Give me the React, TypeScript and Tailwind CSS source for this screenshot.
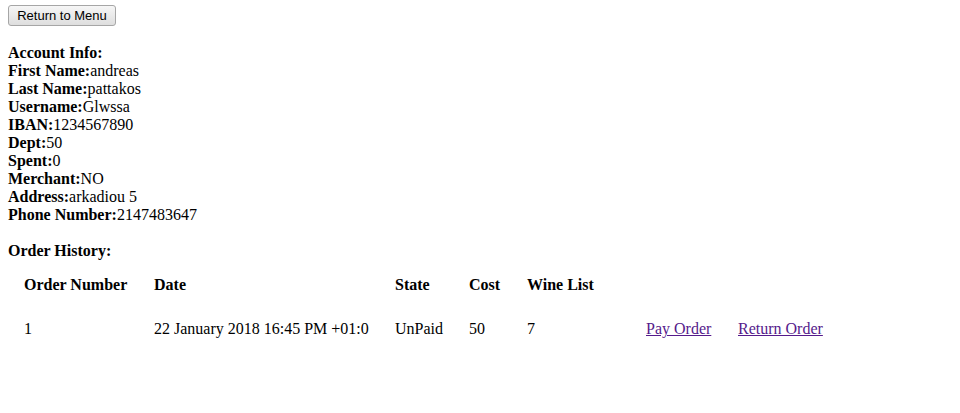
const account: [string, string][] = [
  ['First Name:', 'andreas'],
  ['Last Name:', 'pattakos'],
  ['Username:', 'Glwssa'],
  ['IBAN:', '1234567890'],
  ['Dept:', '50'],
  ['Spent:', '0'],
  ['Merchant:', 'NO'],
  ['Address:', 'arkadiou 5'],
  ['Phone Number:', '2147483647'],
];

const headers = ['Order Number', 'Date', 'State', 'Cost', 'Wine List'];
// widths include the 10px padding on each side
const widths = ['w-[124px]', 'w-[235px]', 'w-[68px]', 'w-[52px]', 'w-[113px]', 'w-[86px]', 'w-[110px]'];

export default function App() {
  return (
    <div className="min-h-[413px] bg-white px-2 text-[16px] leading-[18px] text-black [font-family:'Liberation_Serif',serif]">
      <button className="mt-[5px] h-[21px] w-[108px] rounded-[3px] border border-[#a6a6a6] bg-gradient-to-b from-[#f6f6f6] to-[#dedede] text-[13px] leading-[19px] text-black [font-family:'Liberation_Sans',Arial,sans-serif]">
        Return to Menu
      </button>

      <div className="mt-[18px]">
        <div className="font-bold">Account Info:</div>
        {account.map(([label, value]) => (
          <div key={label}>
            <b>{label}</b>
            {value}
          </div>
        ))}
      </div>

      <div className="mt-[18px] font-bold">Order History:</div>

      <table className="border-separate border-spacing-[6px] text-left">
        <thead>
          <tr>
            {headers.map((h, i) => (
              <th key={h} className={`${widths[i]} whitespace-nowrap p-[10px] text-left font-bold`}>
                {h}
              </th>
            ))}
            <th className={`${widths[5]} p-[10px]`}></th>
            <th className={`${widths[6]} p-[10px]`}></th>
          </tr>
        </thead>
        <tbody>
          <tr>
            <td className="whitespace-nowrap p-[10px]">1</td>
            <td className="whitespace-nowrap p-[10px]">22 January 2018 16:45 PM +01:0</td>
            <td className="whitespace-nowrap p-[10px]">UnPaid</td>
            <td className="whitespace-nowrap p-[10px]">50</td>
            <td className="whitespace-nowrap p-[10px]">7</td>
            <td className="whitespace-nowrap p-[10px]">
              <a href="#" className="text-[#551a8b] underline">Pay Order</a>
            </td>
            <td className="whitespace-nowrap p-[10px]">
              <a href="#" className="text-[#551a8b] underline">Return Order</a>
            </td>
          </tr>
        </tbody>
      </table>
    </div>
  );
}
